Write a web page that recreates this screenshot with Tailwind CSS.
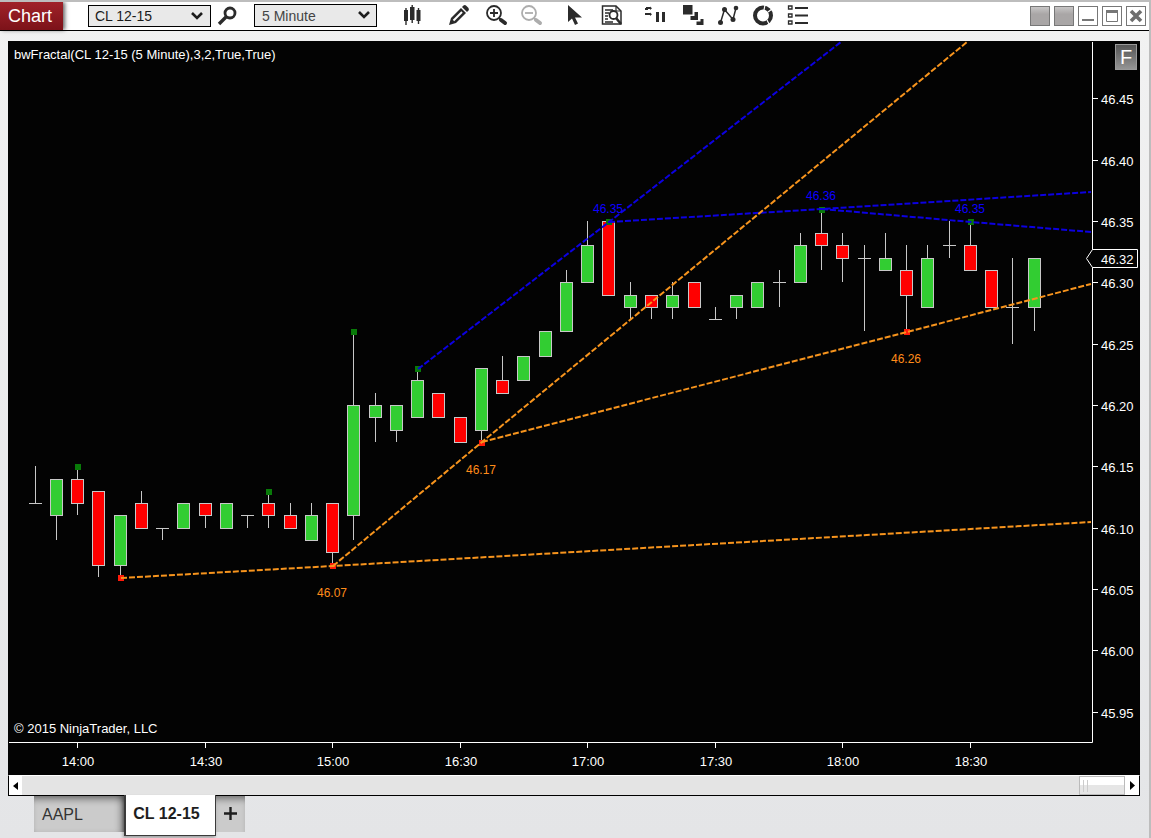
<!DOCTYPE html>
<html lang="en">
<head>
<meta charset="utf-8">
<title>Chart - CL 12-15</title>
<script src="https://cdn.jsdelivr.net/npm/@tailwindcss/browser@4"></script>
</head>
<body class="min-h-screen flex flex-col border-t-2 border-r-2 border-[#bdbdbd] bg-linear-to-b from-[#f2f2f2] to-[#e4e5e7] font-['Liberation_Sans',Arial,sans-serif]">

<header class="h-[29px] flex items-center border-b border-black bg-white">
  <h1 class="h-7 w-[63px] pl-2 flex items-center bg-linear-to-b from-[#a02229] to-[#7c1219] text-lg text-white shadow-[2px_0_4px_rgba(0,0,0,0.6)]">Chart</h1>

  <div class="relative ml-[25px]">
    <select aria-label="Instrument" class="block appearance-none w-[123px] h-[22px] border border-black bg-[#e9e9e9] pl-1.5 text-sm leading-5 text-[#1a1a1a]"><option>CL 12-15</option><option>AAPL</option></select>
    <svg class="absolute right-2 top-[7px] pointer-events-none" width="12" height="8" viewBox="0 0 12 8" fill="none" stroke="#1c1c1c" stroke-width="2.6"><path d="M1 1l5 5 5-5"/></svg>
  </div>
  <button aria-label="Search instrument" class="ml-1.5">
    <svg width="20" height="20" viewBox="0 0 20 20" fill="none" stroke="#2b2b2b"><circle cx="13" cy="7" r="5" stroke-width="2.800"/><path d="M9 11L2 18" stroke-width="3.400"/></svg>
  </button>
  <div class="relative ml-[17px] mb-px">
    <select aria-label="Interval" class="block appearance-none w-[123px] h-[23px] border border-black bg-[#e9e9e9] pl-[7px] text-sm leading-5 text-[#444]"><option>5 Minute</option><option>15 Minute</option></select>
    <svg class="absolute right-[7px] top-[7px] pointer-events-none" width="12" height="8" viewBox="0 0 12 8" fill="none" stroke="#1c1c1c" stroke-width="2.6"><path d="M1 1l5 5 5-5"/></svg>
  </div>

  <div class="ml-[25px] flex items-center" role="toolbar" aria-label="Chart tools">
    <button aria-label="Chart style"><svg width="22" height="22" viewBox="0 0 22 22" fill="#2b2b2b"><path d="M2 5h4v11H2zM8 2h4.500v13H8zM14.500 5h4v11h-4z"/><path d="M3.300 3h1.400v17H3.300zM9.500 0h1.400v18H9.500zM15.800 3h1.400v16h-1.400z"/></svg></button>
    <button aria-label="Drawing tools" class="ml-[23px]"><svg width="24" height="22" viewBox="0 0 24 22"><path d="M2 20l2-7L14 3l5 5L9 18z" fill="#2b2b2b"/><path d="M15 2l1.500-1.500q1.500-1 3 .5l1.500 1.500q1.500 1.500.500 3L20 7z" fill="#2b2b2b"/><path d="M6.500 15.500L15 7" stroke="#fff" stroke-width="2"/></svg></button>
    <button aria-label="Zoom in" class="ml-[13px]"><svg width="24" height="22" viewBox="0 0 24 22" fill="none" stroke="#2b2b2b"><circle cx="10" cy="8" r="7" stroke-width="1.800"/><path d="M10 4v8M6 8h8" stroke-width="1.800"/><path d="M15 13l2 2" stroke-width="2"/><path d="M17 15l4 3" stroke-width="4" stroke-linecap="round"/></svg></button>
    <button aria-label="Zoom out" class="ml-[11px]" disabled><svg width="24" height="22" viewBox="0 0 24 22" fill="none" stroke="#adadad"><circle cx="10" cy="8" r="7" stroke-width="1.800"/><path d="M6 8h8" stroke-width="1.800"/><path d="M15 13l2 2" stroke-width="2"/><path d="M17 15l4 3" stroke-width="4" stroke-linecap="round"/></svg></button>
    <button aria-label="Cursor" class="ml-[19px]"><svg width="20" height="22" viewBox="0 0 20 22" fill="#2b2b2b"><path d="M6 0v17l4-3.500 3 6.500 3-1.500-3-6h7z"/></svg></button>
    <button aria-label="Data box" class="ml-[19px]"><svg width="22" height="22" viewBox="0 0 22 22" fill="none" stroke="#2b2b2b"><path d="M1.500 19V1H15l5 5v13z" stroke-width="1.500"/><path d="M15 1v5h5" stroke-width="1.200"/><path d="M4 5h8M4 8h4M4 11h3M4 14h3M4 17h8" stroke-width="1.500"/><circle cx="12.500" cy="10" r="4" stroke-width="1.800" fill="#fff"/><path d="M15 13l5 6" stroke-width="2.600"/></svg></button>
    <button aria-label="Data series" class="ml-[21px]"><svg width="22" height="22" viewBox="0 0 22 22" fill="#2b2b2b"><path d="M2 2h4V1.500l2 1.700L6 5V4H2zM1 3h3v2H1zM1 8h5v-.5l2 1.700-2 1.800v-1H1zM12 7h3v10h-3zM18 7h3v10h-3z"/></svg></button>
    <button aria-label="Chart panels" class="ml-[17px]"><svg width="22" height="22" viewBox="0 0 22 22" fill="#2b2b2b"><path d="M0 0h9.500v9.500H0zM7.500 11h4V7h3.500v8H7.500zM13.500 16.500h4V14h3v6h-7z"/></svg></button>
    <button aria-label="Indicators" class="ml-3"><svg width="22" height="22" viewBox="0 0 22 22" fill="#2b2b2b"><path d="M3.500 17.500L7.500 4.500l8.500 10 3-11.500" fill="none" stroke="#2b2b2b" stroke-width="1.500"/><circle cx="3.500" cy="17.500" r="2.500"/><circle cx="7.500" cy="4.500" r="2.500"/><circle cx="16" cy="14.500" r="2.500"/><circle cx="19" cy="3" r="2.300"/></svg></button>
    <button aria-label="Strategies" class="ml-[13px]"><svg width="22" height="22" viewBox="0 0 22 22"><circle cx="11" cy="10.500" r="8" fill="none" stroke="#2b2b2b" stroke-width="4"/><path d="M13 0l-1 5M20 4l-4 3M15 15l2.500 5" stroke="#fff" stroke-width="1.200"/></svg></button>
    <button aria-label="Properties" class="ml-[13px]"><svg width="22" height="22" viewBox="0 0 22 22" fill="none" stroke="#2b2b2b"><path d="M1.500 1h3.500v3h-3.500zM1.500 9h3.500v3h-3.500zM1.500 16h3.500v3h-3.500z" stroke-width="1.300"/><path d="M8 3h13M8 10.500h13M8 18h13" stroke-width="2"/></svg></button>
  </div>

  <div class="ml-auto mr-[3px] flex gap-1">
    <button aria-label="Link instrument" class="size-5 border border-[#777] bg-linear-to-b from-[#c8c6c6] to-[#a9a6a6] to-40%"></button>
    <button aria-label="Link interval" class="size-5 border border-[#777] bg-linear-to-b from-[#c8c6c6] to-[#a9a6a6] to-40%"></button>
    <button aria-label="Minimize" class="size-5 border border-[#777]"><svg width="18" height="18" viewBox="0 0 18 18"><path d="M3 13h12" stroke="#777" stroke-width="2"/></svg></button>
    <button aria-label="Maximize" class="size-5 border border-[#777]"><svg width="18" height="18" viewBox="0 0 18 18" fill="none" stroke="#777"><path d="M3.500 3.500h11v11h-11z"/><path d="M3 4.500h12" stroke-width="3"/></svg></button>
    <button aria-label="Close" class="size-5 border border-[#777]"><svg width="18" height="18" viewBox="0 0 18 18"><path d="M4 4l10 10M14 4L4 14" stroke="#6e6e6e" stroke-width="3.600"/></svg></button>
  </div>
</header>

<main class="mt-2.5 ml-2 mr-[9px]">
  <section class="relative bg-black" aria-label="CL 12-15 price chart">
    <svg id="chart" class="block w-full h-auto font-['Liberation_Sans',Arial,sans-serif]" viewBox="8 41 1132 734">
      <rect x="8" y="41" width="1132" height="734" fill="#030303"/>
      <g id="axes" fill="#fff" font-size="13"></g>
      <g id="candles" shape-rendering="crispEdges"></g>
      <g id="markers" shape-rendering="crispEdges"></g>
      <g fill="none" stroke-width="2" stroke-dasharray="6 2">
        <g stroke="#0c00e0"><path d="M418 369L609 222 841 42"/><path d="M609 222L822 209 1091 192"/><path d="M822 209L971 222 1091 232"/></g>
        <g stroke="#f7941d"><path d="M121 578L333 566 1091 522"/><path d="M333 566L482 442 967 42"/><path d="M482 442L907 332 1091 284"/></g>
      </g>
      <g font-size="12" text-anchor="middle" fill="#0c00ff"><text x="608" y="213">46.35</text><text x="821" y="200">46.36</text><text x="970" y="213">46.35</text></g>
      <g font-size="12" text-anchor="middle" fill="#ff8c1a"><text x="332" y="597">46.07</text><text x="481" y="474">46.17</text><text x="906" y="363">46.26</text></g>
      <path d="M1086.500 258.500l6-9h45v18h-45z" fill="#030303" stroke="#fff"/>
      <g fill="#fff" font-size="13">
        <text x="1101" y="264">46.32</text>
        <text x="14" y="59">bwFractal(CL 12-15 (5 Minute),3,2,True,True)</text>
        <text x="14" y="733">© 2015 NinjaTrader, LLC</text>
      </g>
    </svg>
    <button class="absolute right-[3px] top-[3px] w-[22px] h-[26px] border border-[#999] bg-linear-to-b from-[#555] to-[#949494] text-xl leading-6 text-white">F</button>
  </section>

  <div class="flex h-[21px] border-x border-b border-t border-x-black border-b-black border-t-white bg-[#e4e4e4]">
    <button aria-label="Scroll left" class="w-[13px] bg-white flex items-center justify-center"><svg width="5" height="8" viewBox="0 0 5 8"><path d="M5 0v8L0 4z"/></svg></button>
    <div class="flex-1 flex justify-end">
      <button aria-label="Scroll position" class="w-[46px] border border-[#bbb] bg-linear-to-b from-white from-50% to-[#e6e6e6] to-50% pl-[3px] flex items-center gap-[3px]"><span class="w-px h-3 bg-[#ccc]"></span><span class="w-px h-3 bg-[#ccc]"></span></button>
    </div>
    <button aria-label="Scroll right" class="w-3.5 bg-white flex items-center justify-center"><svg width="5" height="9" viewBox="0 0 5 9"><path d="M0 0v9l5-4.500z"/></svg></button>
  </div>

  <nav class="ml-[26px] flex items-start" aria-label="Chart tabs">
    <button class="w-[90px] h-9 pl-2 pt-0.5 text-left text-base text-[#333] bg-[#cbcbcb] shadow-[inset_0_7px_7px_-4px_rgba(0,0,0,0.45),inset_-7px_0_7px_-4px_rgba(0,0,0,0.4)]">AAPL</button>
    <button class="-mt-px w-[92px] h-[41px] pb-0.5 border border-t-0 border-l-2 border-[#3a3a3a] bg-white text-base font-bold text-[#1e1e1e] pr-2 shadow-[-1px_2px_3px_rgba(0,0,0,0.3)]">CL 12-15</button>
    <button aria-label="Add tab" class="w-[29px] h-9 pb-0.5 flex items-center justify-center bg-[#cbcbcb] shadow-[inset_0_7px_7px_-4px_rgba(0,0,0,0.45)]"><svg width="13" height="13" viewBox="0 0 13 13"><path d="M6.500 0v13M0 6.500h13" stroke="#1e1e1e" stroke-width="2.400"/></svg></button>
  </nav>
</main>

<script>
const NS = "http://www.w3.org/2000/svg";
const add = (id, tag, attrs, text) => {
  const el = document.createElementNS(NS, tag);
  for (const k in attrs) el.setAttribute(k, attrs[k]);
  if (text) el.textContent = text;
  document.getElementById(id).append(el);
};
// Prices are hundredths above 46.00; bars are five minutes apart.
const y = p => Math.floor(650.9 - p * 12.27);
const x = i => Math.floor(35.1 + i * 21.255);

// [open, close, high, low]
const bars = [
  [12,12,15,12],[11,14,14,9],[14,12,15,11],[13,7,13,6],[7,11,11,6],[12,10,13,10],[10,10,10,9],[10,12,12,10],
  [12,11,12,10],[10,12,12,10],[11,11,11,10],[12,11,13,10],[11,10,12,10],[9,11,12,9],[12,8,12,7],[11,20,26,9],
  [19,20,21,17],[18,20,20,17],[19,22,23,19],[21,19,21,19],[19,17,19,17],[18,23,23,17],[22,21,24,21],[22,24,24,22],
  [24,26,26,24],[26,30,31,26],[30,33,35,30],[35,29,35,29],[28,29,30,27],[29,28,29,27],[28,29,30,27],[30,28,30,28],
  [27,27,28,27],[28,29,29,27],[28,30,30,28],[30,30,31,28],[30,33,34,30],[34,33,36,31],[33,32,34,30],[32,32,33,26],
  [31,32,34,31],[31,29,33,26],[28,32,33,28],[33,33,35,32],[33,31,35,31],[31,28,31,28],[28,28,32,25],[28,32,32,26]
];
bars.forEach(([o, c, h, l], i) => {
  add("candles", "rect", {x: x(i), y: y(h), width: 1, height: Math.max(1, y(l) - y(h)), fill: "#c8c8c8"});
  const top = y(Math.max(o, c)), height = y(Math.min(o, c)) - top + 1;
  add("candles", "rect", {x: x(i) - 6, y: top, width: 13, height, fill: "#c8c8c8"});
  if (o !== c) add("candles", "rect", {x: x(i) - 5, y: top + 1, width: 11, height: height - 2, fill: c > o ? "#32cd32" : "#ff0000"});
});
[[2,15],[11,13],[15,26],[18,23],[27,35],[37,36],[44,35]].forEach(([i, p]) =>
  add("markers", "rect", {x: x(i) - 2, y: y(p) - 2, width: 6, height: 6, fill: "#087a08"}));
[[4,6],[14,7],[21,17],[41,26]].forEach(([i, p]) =>
  add("markers", "rect", {x: x(i) - 2, y: y(p) - 2, width: 6, height: 6, fill: "#ff1a0a"}));

add("axes", "path", {d: "M9 742.5H1092.500V42", fill: "none", stroke: "#fff"});
for (let p = -5; p <= 45; p += 5) {
  add("axes", "rect", {x: 1093, y: y(p), width: 5, height: 1});
  add("axes", "text", {x: 1101, y: y(p) + 6}, (46 + p / 100).toFixed(2));
}
["14:00","14:30","15:00","16:30","17:00","17:30","18:00","18:30"].forEach((t, n) => {
  add("axes", "rect", {x: x(2 + n * 6), y: 743, width: 1, height: 5});
  add("axes", "text", {x: x(2 + n * 6) + 1, y: 766, "text-anchor": "middle"}, t);
});
</script>
</body>
</html>
